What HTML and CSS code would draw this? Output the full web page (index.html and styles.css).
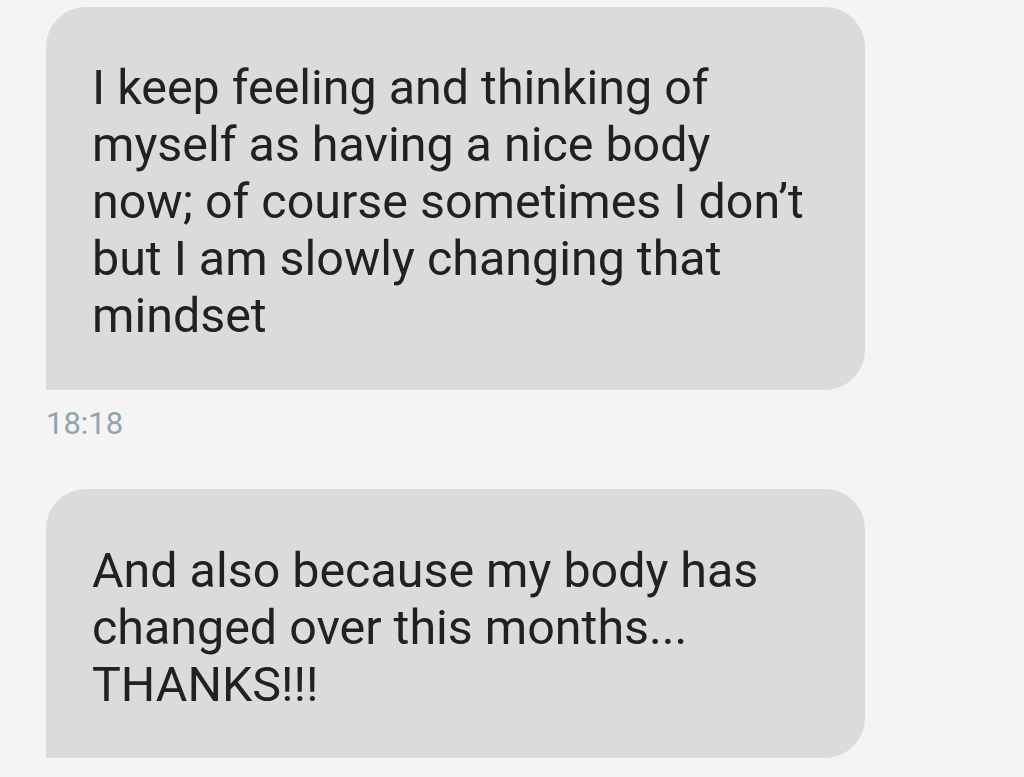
FILE: index.html
```html
<!DOCTYPE html>
<html lang="en">
<head>
    <meta charset="UTF-8">
    <meta name="viewport" content="width=device-width, initial-scale=1.0">
    <title>Messages</title>
    <link rel="stylesheet" href="styles.css">
</head>
<body>
    <div class="thread">
        <div class="bubble bubble-first">
            I keep feeling and thinking of myself as having a nice body now; of course sometimes I don’t but I am slowly changing that mindset
        </div>
        <div class="time">18:18</div>
        <div class="bubble bubble-second">
            And also because my body has changed over this months... THANKS!!!
        </div>
    </div>
</body>
</html>
```

FILE: styles.css
```css
/* Chat thread */
body {
    margin: 0;
    padding: 0;
    background-color: #f4f4f4;
    font-family: Roboto, "Liberation Sans", sans-serif;
}

.thread {
    padding: 7px 0 0 46px;
}

.bubble {
    width: 819px;
    box-sizing: border-box;
    padding: 52px 48px 46px 46px;
    background-color: #dbdbdb;
    color: #212121;
    font-size: 48.4px;
    line-height: 57px;
    border-radius: 40px 40px 40px 0;
}

.time {
    margin-top: 16px;
    color: #90a4ae;
    font-size: 31px;
    line-height: 36px;
}

.bubble-second {
    margin-top: 47px;
    padding-top: 53px;
    padding-bottom: 45px;
}
```
